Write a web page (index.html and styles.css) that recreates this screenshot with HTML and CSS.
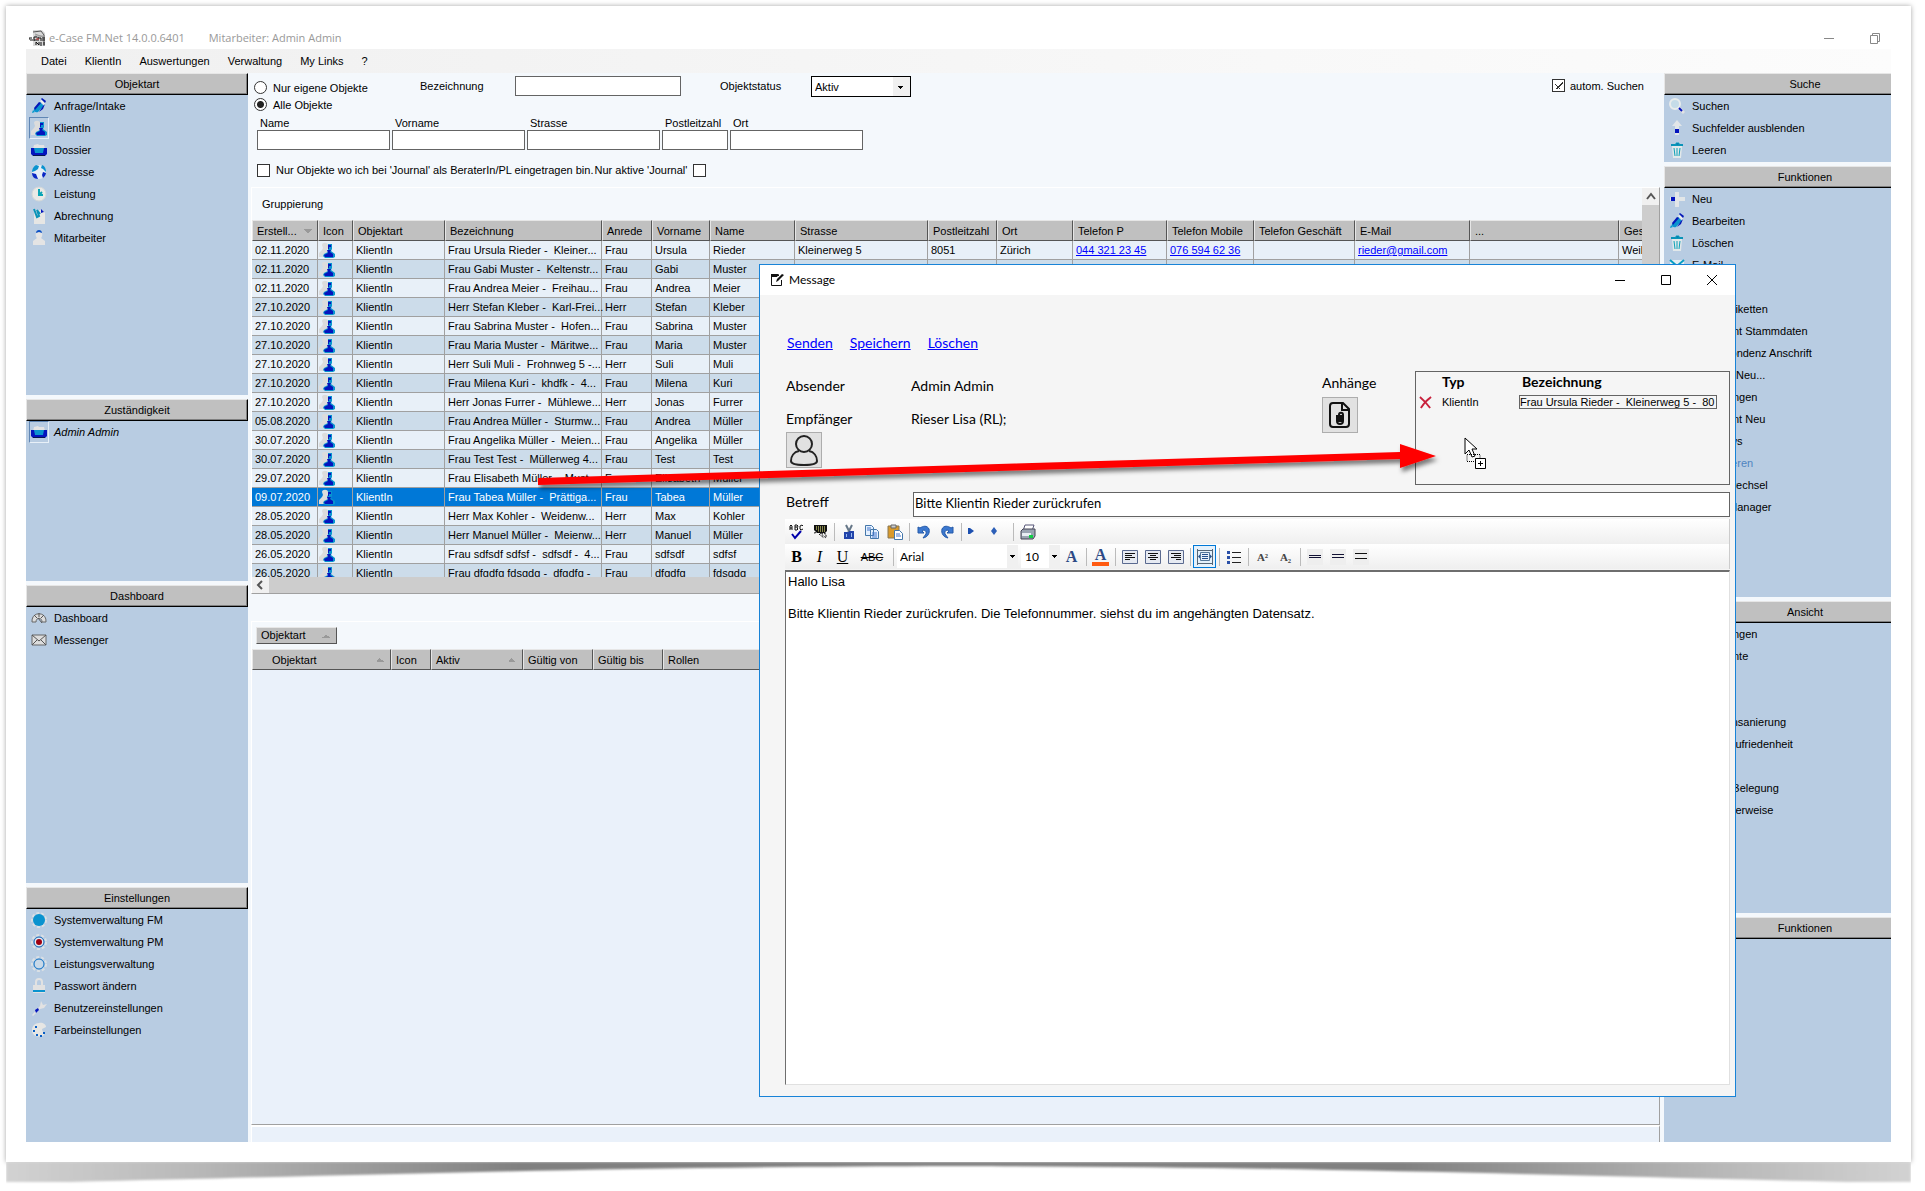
FILE: index.html
```
<!DOCTYPE html>
<html lang="de">
<head>
    <meta charset="UTF-8">
    <meta name="viewport" content="width=device-width, initial-scale=1.0">
    <title>e-Case FM.Net</title>
    <link rel="stylesheet" href="styles.css">
</head>
<body>
    <!-- icon sprite -->
    <svg class="sprite" aria-hidden="true">
        <symbol id="i-pen" viewBox="0 0 16 16">
            <path d="M1 15l1-3 2 2z" fill="#09c"/>
            <path d="M3 11l6-7 4 4-6 6c-2 1-5-1-4-3z" fill="#0a93cf"/>
            <path d="M3 10l5-6 2 1-6 7zM12 8l2-2-2 5-4 3z" fill="#0518b8"/>
            <path d="M9 3l2-1 3 3-1 2z" fill="#eee"/>
            <path d="M11 0l4 3-1 2-4-4z" fill="#0518b8"/>
        </symbol>
        <symbol id="i-people" viewBox="0 0 16 16">
            <path d="M3 3c0-3 6-3 6 0v3l-1 2 2 2v5H0v-4l3-3 1-2z" fill="#dcdcdc"/>
            <path d="M9 2h4v5l-1 2 4 3v3l-2 1H6l-2-2 1-2 4-2z" fill="#0a93cf"/>
            <path d="M9 3h3v2h-2v2H9zM8 8h4l-1 2 3 2v3H6l-1-2 4-2z" fill="#0414bd"/>
        </symbol>
        <symbol id="i-tray" viewBox="0 0 16 16">
            <path d="M3 3l4-1 1 1h5l1 4H2z" fill="#e4e4e4"/>
            <path d="M0 6h16v6l-2 2H2l-2-2z" fill="#0414bd"/>
            <path d="M3 6h10l-1 5H4z" fill="#0a93cf"/>
            <path d="M2 13h12v1H2z" fill="#06154e"/>
        </symbol>
        <symbol id="i-globe" viewBox="0 0 16 16">
            <circle cx="8" cy="8" r="7" fill="#e6eef5"/>
            <path d="M5 1l3 1-1 3-3 2-3 1c0-3 1-5 4-7zM11 1c3 1 4 4 4 7l-3-3-2-1z" fill="#0a93cf"/>
            <path d="M1 9l4 1 2 5c-4 0-6-3-6-6zM12 8l3 1c0 2-2 4-3 5l-1-3z" fill="#0a28c4"/>
        </symbol>
        <symbol id="i-clock" viewBox="0 0 16 16">
            <circle cx="8" cy="8" r="7" fill="#e9e9e6" stroke="#d3d7d8"/>
            <path d="M8 3v6h4M8 9l3-3" fill="none" stroke="#0aa5b5" stroke-width="2"/>
        </symbol>
        <symbol id="i-clip" viewBox="0 0 16 16">
            <path d="M3 2h8l3 3v11H3z" fill="#e6e6e4"/>
            <path d="M3 1l3 8 2-1-2-6 3 4" fill="none" stroke="#0a93b8" stroke-width="2"/>
            <path d="M10 1l3 3-3 1z" fill="#0414bd"/>
        </symbol>
        <symbol id="i-worker" viewBox="0 0 16 16">
            <path d="M8 1c4 0 4 5 2 7l4 3v4H2v-4l4-3C4 6 4 1 8 1z" fill="#e4e4e4"/>
            <path d="M5 3c0-4 6-4 6 0L8 2z" fill="#0a4fc4"/>
        </symbol>
        <symbol id="i-gauge" viewBox="0 0 16 16">
            <path d="M1 12C0 1 16 1 15 12h-4c0-5-6-5-6 0z" fill="#ddd" stroke="#666"/>
            <path d="M3 5l3 3M8 3v4M13 5l-3 3M7 8l4 5" stroke="#555"/>
        </symbol>
        <symbol id="i-mail" viewBox="0 0 16 16">
            <path d="M1 3h14v10H1z" fill="#ddd" stroke="#666"/>
            <path d="M1 3l7 6 7-6M1 13l5-5M15 13l-5-5" fill="none" stroke="#555"/>
        </symbol>
        <symbol id="i-mail2" viewBox="0 0 16 16">
            <path d="M1 3h14v10H1z" fill="#e6eef2"/>
            <path d="M1 3l7 6 7-6" fill="none" stroke="#0a9fc4" stroke-width="2"/>
        </symbol>
        <symbol id="i-cog-fill" viewBox="0 0 16 16">
            <circle cx="8" cy="8" r="7" fill="none" stroke="#dbe0e4" stroke-width="2" stroke-dasharray="3 2"/>
            <circle cx="8" cy="8" r="6" fill="#0a93cf"/>
        </symbol>
        <symbol id="i-cog-red" viewBox="0 0 16 16">
            <circle cx="8" cy="8" r="7" fill="none" stroke="#dbe0e4" stroke-width="2" stroke-dasharray="3 2"/>
            <circle cx="8" cy="8" r="5" fill="#e5ecf2" stroke="#0a5fb4"/>
            <circle cx="8" cy="8" r="3" fill="#a00010"/>
        </symbol>
        <symbol id="i-cog" viewBox="0 0 16 16">
            <circle cx="8" cy="8" r="7" fill="none" stroke="#dbe0e4" stroke-width="2" stroke-dasharray="3 2"/>
            <circle cx="8" cy="8" r="5" fill="#c9d9e8" stroke="#0a6fc4"/>
        </symbol>
        <symbol id="i-lock" viewBox="0 0 16 16">
            <path d="M5 8V4c0-4 6-4 6 0v4" fill="none" stroke="#e2e2e2" stroke-width="2"/>
            <path d="M2 7h12v8H2z" fill="#e2e2e2"/>
            <path d="M2 12h12v2H2z" fill="#0a93cf"/>
        </symbol>
        <symbol id="i-wrench" viewBox="0 0 16 16">
            <path d="M1 15l8-9 1-5 2 4 4-1-3 4-4 1-7 7z" fill="#e2e2e2"/>
            <path d="M4 10l3-2 1 2-3 3z" fill="#0414bd"/>
        </symbol>
        <symbol id="i-palette" viewBox="0 0 16 16">
            <path d="M8 1c3-1 7 1 7 4l-4 2c0 3 3 3 2 6-4 3-12 2-12-5 0-4 3-7 7-7z" fill="#e6e6e4"/>
            <path d="M4 4h2v2H4zM2 8h2v2H2zM5 12h2v2H5zM9 13h2v2H9zM12 10h2v2h-2z" fill="#0a5fc4"/>
        </symbol>
        <symbol id="i-search" viewBox="0 0 16 16">
            <circle cx="6" cy="6" r="5" fill="#c5dce8" stroke="#e8ecec" stroke-width="2"/>
            <path d="M10 10l5 5" stroke="#e2e2e2" stroke-width="3"/>
            <path d="M10 10l3 3" stroke="#0414bd" stroke-width="2"/>
        </symbol>
        <symbol id="i-up" viewBox="0 0 16 16">
            <path d="M8 0l5 6h-3v9H6V6H3z" fill="#e2e6e8"/>
            <path d="M6 9h4v4H6z" fill="#0414bd"/>
        </symbol>
        <symbol id="i-bin" viewBox="0 0 16 16">
            <path d="M3 4h10l-1 12H4z" fill="#e2e8ea"/>
            <path d="M2 2h12v2H2z" fill="#0a93b8"/>
            <path d="M7 1h3v2H7zM5 6l1 8M8 6v8M11 6l-1 8" fill="#0a5fb4" stroke="#0aa0b8"/>
        </symbol>
        <symbol id="i-plus" viewBox="0 0 16 16">
            <path d="M6 1h4v5h6v4h-6v6H6v-6H1V6h5z" fill="#e2e6e8"/>
            <path d="M2 6h4v4H2z" fill="#0414bd"/>
        </symbol>
    </svg>

    <div class="paper">
        <header class="titlebar">
            <svg class="app-icon" viewBox="0 0 16 16">
                <path d="M4 0h9l3 3v13H4z" fill="#d9d9d9"/>
                <path d="M4 2l8-1 3 4v11" fill="none" stroke="#555"/>
                <path d="M6 4l8 3M6 6h8" stroke="#999"/>
                <path d="M0 8h3M1 10h3M0 8v2M5 7v4M5 7h3M5 10h3M9 7v4M9 8h3M12 8v3M13 8h3M13 10h3" fill="none" stroke="#111"/>
                <path d="M7 9h3" stroke="#c33"/>
                <path d="M7 15v-3l3 3v-3M11 13h2M11 15h2M15 12v3" fill="none" stroke="#111"/>
            </svg>
            <span class="app-name">e-Case FM.Net 14.0.0.6401</span>
            <span>Mitarbeiter: Admin Admin</span>
            <button class="win-btn first" aria-label="Minimieren"><svg viewBox="0 0 12 12"><path d="M1 6.500h10" stroke="#888"/></svg></button>
            <button class="win-btn" aria-label="Wiederherstellen"><svg viewBox="0 0 12 12"><path d="M1.500 3.500h7v8h-7zM3.500 3V1.500h7v8H9" fill="none" stroke="#888"/></svg></button>
        </header>
        <nav class="menubar">
            <button>Datei</button>
            <button>KlientIn</button>
            <button>Auswertungen</button>
            <button>Verwaltung</button>
            <button>My Links</button>
            <button>?</button>
        </nav>

        <div class="workspace">
            <aside class="side left">
                <section class="group g-objektart">
                    <h2>Objektart</h2>
                    <ul>
                        <li><button><svg><use href="#i-pen"/></svg>Anfrage/Intake</button></li>
                        <li><button class="selected"><svg><use href="#i-people"/></svg>KlientIn</button></li>
                        <li><button><svg><use href="#i-tray"/></svg>Dossier</button></li>
                        <li><button><svg><use href="#i-globe"/></svg>Adresse</button></li>
                        <li><button><svg><use href="#i-clock"/></svg>Leistung</button></li>
                        <li><button><svg><use href="#i-clip"/></svg>Abrechnung</button></li>
                        <li><button><svg><use href="#i-worker"/></svg>Mitarbeiter</button></li>
                    </ul>
                </section>
                <section class="group g-zustaendigkeit">
                    <h2>Zuständigkeit</h2>
                    <ul>
                        <li><button class="selected own"><svg><use href="#i-tray"/></svg>Admin Admin</button></li>
                    </ul>
                </section>
                <section class="group g-dashboard">
                    <h2>Dashboard</h2>
                    <ul>
                        <li><button><svg><use href="#i-gauge"/></svg>Dashboard</button></li>
                        <li><button><svg><use href="#i-mail"/></svg>Messenger</button></li>
                    </ul>
                </section>
                <section class="group g-einstellungen">
                    <h2>Einstellungen</h2>
                    <ul>
                        <li><button><svg><use href="#i-cog-fill"/></svg>Systemverwaltung FM</button></li>
                        <li><button><svg><use href="#i-cog-red"/></svg>Systemverwaltung PM</button></li>
                        <li><button><svg><use href="#i-cog"/></svg>Leistungsverwaltung</button></li>
                        <li><button><svg><use href="#i-lock"/></svg>Passwort ändern</button></li>
                        <li><button><svg><use href="#i-wrench"/></svg>Benutzereinstellungen</button></li>
                        <li><button><svg><use href="#i-palette"/></svg>Farbeinstellungen</button></li>
                    </ul>
                </section>
            </aside>

            <main class="center">
                <form class="filter">
                    <div class="filter-top">
                        <div class="scope">
                            <label><input type="radio" name="scope">Nur eigene Objekte</label>
                            <label><input type="radio" name="scope" checked>Alle Objekte</label>
                        </div>
                        <label class="lbl-bez" for="bezeichnung">Bezeichnung</label>
                        <input class="field bez" id="bezeichnung" type="text">
                        <label class="lbl-status" for="status">Objektstatus</label>
                        <select id="status" class="status"><option>Aktiv</option><option>Inaktiv</option></select>
                        <label class="auto"><input type="checkbox" checked>autom. Suchen</label>
                    </div>
                    <div class="filter-fields">
                        <label>Name<input class="field" type="text"></label>
                        <label>Vorname<input class="field" type="text"></label>
                        <label>Strasse<input class="field" type="text"></label>
                        <label class="plz">Postleitzahl<input class="field" type="text"></label>
                        <label>Ort<input class="field" type="text"></label>
                    </div>
                    <div class="filter-journal">
                        <label><input type="checkbox">Nur Objekte wo ich bei 'Journal' als BeraterIn/PL eingetragen bin.</label>
                        <label>Nur aktive 'Journal'<input type="checkbox"></label>
                    </div>
                </form>

                <section class="grid-panel">
                    <div class="grid-main">
                        <p class="grouping">Gruppierung</p>
                        <div class="table-clip">
                            <table class="objects">
                                <colgroup>
                                    <col class="w66"><col class="w35"><col class="w92"><col class="w157"><col class="w50"><col class="w58"><col class="w85"><col class="w133"><col class="w69"><col class="w76"><col class="w94"><col class="w87"><col class="w101"><col class="w115"><col class="w149"><col class="w76">
                                </colgroup>
                                <thead>
                                    <tr><th class="sort-down">Erstell...</th><th>Icon</th><th>Objektart</th><th>Bezeichnung</th><th>Anrede</th><th>Vorname</th><th>Name</th><th>Strasse</th><th>Postleitzahl</th><th>Ort</th><th>Telefon P</th><th>Telefon Mobile</th><th>Telefon Geschäft</th><th>E-Mail</th><th>...</th><th>Geschlecht</th></tr>
                                </thead>
                                <tbody id="rows"></tbody>
                            </table>
                        </div>
                        <div class="hscroll"><svg viewBox="0 0 17 17"><path d="M10 4L6 8l4 4" fill="none" stroke="#555" stroke-width="2"/></svg></div>
                    </div>
                    <div class="vscroll"><svg viewBox="0 0 17 17"><path d="M5 11l4-5 4 5" fill="none" stroke="#555" stroke-width="2"/></svg></div>
                </section>

                <section class="details">
                    <button class="group-by">Objektart</button>
                    <table class="roles">
                        <colgroup><col class="w139"><col class="w40"><col class="w92"><col class="w70"><col class="w70"><col></colgroup>
                        <thead><tr><th class="sort-up indent">Objektart</th><th>Icon</th><th class="sort-up">Aktiv</th><th>Gültig von</th><th>Gültig bis</th><th>Rollen</th></tr></thead>
                    </table>
                </section>
                <footer class="status-strip"></footer>
            </main>

            <aside class="side right">
                <section class="group g-suche">
                    <h2>Suche</h2>
                    <ul>
                        <li><button><svg><use href="#i-search"/></svg>Suchen</button></li>
                        <li><button><svg><use href="#i-up"/></svg>Suchfelder ausblenden</button></li>
                        <li><button><svg><use href="#i-bin"/></svg>Leeren</button></li>
                    </ul>
                </section>
                <section class="group g-funktionen">
                    <h2>Funktionen</h2>
                    <ul>
                        <li><button><svg><use href="#i-plus"/></svg>Neu</button></li>
                        <li><button><svg><use href="#i-pen"/></svg>Bearbeiten</button></li>
                        <li><button><svg><use href="#i-bin"/></svg>Löschen</button></li>
                        <li><button><svg><use href="#i-mail2"/></svg>E-Mail</button></li>
                        <li><button><svg></svg>Brief</button></li>
                        <li><button><svg></svg>Adressetiketten</button></li>
                        <li><button><svg></svg>Dokument Stammdaten</button></li>
                        <li><button><svg></svg>Korrespondenz Anschrift</button></li>
                        <li><button><svg></svg>Aufgabe Neu...</button></li>
                        <li><button><svg></svg>Zuweisungen</button></li>
                        <li><button><svg></svg>Dokument Neu</button></li>
                        <li><button><svg></svg>Workflows</button></li>
                        <li><button disabled><svg></svg>Deaktivieren</button></li>
                        <li><button><svg></svg>Beraterwechsel</button></li>
                        <li><button><svg></svg>Termin Manager</button></li>
                    </ul>
                </section>
                <section class="group g-ansicht">
                    <h2>Ansicht</h2>
                    <ul>
                        <li><button><svg></svg>Zuweisungen</button></li>
                        <li><button><svg></svg>Dokumente</button></li>
                        <li><button><svg></svg>Notiz</button></li>
                        <li><button><svg></svg>Ziele</button></li>
                        <li><button><svg></svg>Schuldensanierung</button></li>
                        <li><button><svg></svg>Kundenzufriedenheit</button></li>
                        <li><button><svg></svg>Plan</button></li>
                        <li><button><svg></svg>Zimmer Belegung</button></li>
                        <li><button><svg></svg>Kundenverweise</button></li>
                    </ul>
                </section>
                <section class="group g-extra">
                    <h2>Funktionen</h2>
                </section>
            </aside>
        </div>
        <svg class="paper-shadow" viewBox="0 0 1905 28" preserveAspectRatio="none" aria-hidden="true">
            <defs>
                <linearGradient id="curl"><stop offset="0" stop-color="#d2d2d2"/><stop offset=".1" stop-color="#b8b8b8"/><stop offset=".27" stop-color="#808080"/><stop offset=".73" stop-color="#808080"/><stop offset=".9" stop-color="#b8b8b8"/><stop offset="1" stop-color="#d2d2d2"/></linearGradient>
                <filter id="soft" x="-1%" y="-20%" width="102%" height="160%"><feGaussianBlur stdDeviation="1"/></filter>
            </defs>
            <path d="M0 0H1905V20H1840C1500 12 1300 5 952 4C600 5 400 12 65 20H0z" fill="url(#curl)" filter="url(#soft)"/>
        </svg>
    </div>

    <!-- message window -->
    <section class="dialog" role="dialog" aria-label="Message">
        <header class="dialog-title">
            <svg class="note-icon" viewBox="0 0 15 14">
                <path d="M9 2.500H1.500v10h10V7" fill="none" stroke="#111"/>
                <path d="M1 1h8l-2 3H1z" fill="#111"/>
                <path d="M6 9l1-3 5-5 2 1-6 6z" fill="#111"/>
            </svg>
            <span>Message</span>
            <button class="win-btn first" aria-label="Minimieren"><svg viewBox="0 0 12 12"><path d="M1 6.500h10" stroke="#000"/></svg></button>
            <button class="win-btn" aria-label="Maximieren"><svg viewBox="0 0 12 12"><path d="M1.500 1.500h9v9h-9z" fill="none" stroke="#000"/></svg></button>
            <button class="win-btn" aria-label="Schliessen"><svg viewBox="0 0 12 12"><path d="M1 1l10 10M11 1L1 11" stroke="#000"/></svg></button>
        </header>
        <div class="dialog-body">
            <nav class="actions">
                <a href="#">Senden</a>
                <a href="#">Speichern</a>
                <a href="#">Löschen</a>
            </nav>
            <div class="head">
                <dl class="people">
                    <dt>Absender</dt><dd>Admin Admin</dd>
                    <dt>Empfänger
                        <button class="square" aria-label="Empfänger wählen"><svg viewBox="0 0 34 34"><g fill="none" stroke="#222" stroke-width="2"><ellipse cx="17" cy="11" rx="8" ry="8"/><path d="M12 18C7 19 4 23 4 28c0 3 4 4 13 4s13-1 13-4c0-5-3-9-8-10"/></g></svg></button>
                    </dt><dd>Rieser Lisa (RL);</dd>
                </dl>
                <div class="attach">
                    <span>Anhänge</span>
                    <button class="square" aria-label="Anhang hinzufügen"><svg viewBox="0 0 34 34"><g fill="none" stroke="#111" stroke-width="2"><path d="M10 5h10l6 6v15q0 3-3 3H10q-3 0-3-3V8q0-3 3-3zM19 5v7h7"/><path d="M14 17v6c0 4 6 4 6 0v-6c0-3-4-3-4 0v6h2v-6"/></g></svg></button>
                </div>
                <div class="attachments">
                    <table>
                        <thead><tr><th></th><th>Typ</th><th>Bezeichnung</th></tr></thead>
                        <tbody><tr>
                            <td><button class="remove" aria-label="Entfernen"><svg viewBox="0 0 14 14"><path d="M1 1q6 5 11 12M13 1Q6 6 2 13" fill="none" stroke="#c8203c" stroke-width="2"/></svg></button></td>
                            <td>KlientIn</td>
                            <td><input type="text" aria-label="Bezeichnung" value="Frau Ursula Rieder -  Kleinerweg 5 -  80"></td>
                        </tr></tbody>
                    </table>
                </div>
            </div>
            <div class="subject">
                <label for="betreff">Betreff</label>
                <input id="betreff" type="text" value="Bitte Klientin Rieder zurückrufen">
            </div>
            <div class="toolbar">
                <button aria-label="Rechtschreibung"><svg viewBox="0 0 16 16"><path d="M1 6V2l1-1 1 1v4M1 4h2M6 6V1h2l1 1-1 2 1 1-1 1H6M6 3h2M14 2l-1-1-2 1v3l1 1 2-1" fill="none" stroke="#111"/><path d="M3 10l3 4 6-7" fill="none" stroke="#00a" stroke-width="2"/></svg></button>
                <button aria-label="Textbausteine"><svg viewBox="0 0 16 16"><path d="M2 1h13v6l-2 2H5L2 6z" fill="#111"/><path d="M4 3h10M4 5h10M6 7h7" stroke="#ff8" stroke-dasharray="1 1"/><path d="M2 9l5-1 7 6M7 10l5 4M9 9l5 1v4" fill="none" stroke="#111" stroke-dasharray="2 1"/></svg></button>
                <i class="sep"></i>
                <button aria-label="Ausschneiden"><svg viewBox="0 0 16 16"><path d="M5 1l4 8M11 1L7 9" stroke="#678" stroke-width="2"/><path d="M4 9h3v5H4zM9 8h3v6H9z" fill="#9bbcf0" stroke="#24a" stroke-width="2"/></svg></button>
                <button aria-label="Kopieren"><svg viewBox="0 0 16 16"><path d="M1.500 1.500h6l2 2v8h-8zM6.500 5.500h6l2 2v7h-8z" fill="#e4f0ff" stroke="#47a"/><path d="M3 4h4M3 6h3M8 9h5M8 11h5M8 13h5" stroke="#47c"/></svg></button>
                <button aria-label="Einfügen"><svg viewBox="0 0 16 16"><path d="M1 2h11v12H1z" fill="#d99a2b" stroke="#875"/><path d="M4 1h5v3H4z" fill="#ccc" stroke="#666"/><path d="M7.500 6.500h5l3 3v6h-8z" fill="#fff" stroke="#47a"/><path d="M9 10h4M9 12h5" stroke="#47c"/></svg></button>
                <i class="sep"></i>
                <button aria-label="Rückgängig"><svg viewBox="0 0 16 16"><path d="M2 3v6h6L6 7c2-2 5 0 4 3l-3 4c5-1 7-5 6-9-2-4-6-3-9-1z" fill="#3b78d0" stroke="#2459a8"/></svg></button>
                <button aria-label="Wiederholen"><svg viewBox="0 0 16 16"><path d="M14 3v6H8l2-2c-2-2-5 0-4 3l3 4c-5-1-7-5-6-9 2-4 6-3 9-1z" fill="#3b78d0" stroke="#2459a8"/></svg></button>
                <i class="sep"></i>
                <button aria-label="Zurück"><svg viewBox="0 0 16 16"><path d="M0 4h2l4 3-4 3H0z" fill="#1c4fb0"/></svg></button>
                <button aria-label="Vor"><svg viewBox="0 0 16 16"><path d="M0 7l3-4 3 4-3 4z" fill="#2c5fb8"/></svg></button>
                <i class="sep"></i>
                <button aria-label="Drucken"><svg viewBox="0 0 16 16"><path d="M5 1h9l-2 6H3z" fill="#fff" stroke="#557"/><path d="M1 7l2-2h12v7l-2 3H1z" fill="#9aa4b2" stroke="#445"/><path d="M2 9h9v3H2z" fill="#e8eef4"/><path d="M9 11h4v3H9z" fill="#1c4"/></svg></button>
            </div>
            <div class="toolbar">
                <button class="t-bold">B</button>
                <button class="t-italic">I</button>
                <button class="t-under">U</button>
                <button class="t-strike">ABC</button>
                <i class="sep"></i>
                <select class="font-name" aria-label="Schriftart"><option>Arial</option></select>
                <select class="font-size" aria-label="Schriftgrösse"><option>10</option></select>
                <button class="t-blue">A</button>
                <i class="sep"></i>
                <button class="t-color">A</button>
                <i class="sep"></i>
                <button aria-label="Linksbündig"><svg viewBox="0 0 16 16"><path d="M.5 1.500h15v13H.5z" fill="#e6eaf2" stroke="#5a6a90"/><path d="M3 4.500h10M3 6.500h7M3 8.500h10M3 10.500h5" stroke="#111"/></svg></button>
                <button aria-label="Zentriert"><svg viewBox="0 0 16 16"><path d="M.5 1.500h15v13H.5z" fill="#e6eaf2" stroke="#5a6a90"/><path d="M3 4.500h10M5 6.500h6M3 8.500h10M5 10.500h6" stroke="#111"/></svg></button>
                <button aria-label="Rechtsbündig"><svg viewBox="0 0 16 16"><path d="M.5 1.500h15v13H.5z" fill="#e6eaf2" stroke="#5a6a90"/><path d="M3 4.500h10M6 6.500h7M3 8.500h10M8 10.500h5" stroke="#111"/></svg></button>
                <i class="sep"></i>
                <button class="pressed" aria-label="Blocksatz"><svg viewBox="0 0 16 16"><path d="M.5 0v16M15.500 0v16M1 1.500h14M1 14.500h14" stroke="#567"/><path d="M3.500 3.500h9v8h-9z" fill="#e8f0fa" stroke="#579"/><path d="M5 5.500h6M5 7.500h6M5 9.500h6" stroke="#25518c"/><path d="M1 7.500l2-2v4zM15 7.500l-2-2v4z" fill="#25518c"/></svg></button>
                <i class="sep"></i>
                <button aria-label="Aufzählung"><svg viewBox="0 0 16 16"><path d="M1 2h3v3H1zM1 7h3v3H1zM1 12h3v3H1z" fill="#2a50a8"/><path d="M6 3.500h9M6 8.500h9M6 13.500h9" stroke="#222"/></svg></button>
                <i class="sep"></i>
                <button class="t-script">A²</button>
                <button class="t-script">A₂</button>
                <i class="sep"></i>
                <button class="spacing" aria-label="Zeilenabstand 1"><svg viewBox="0 0 16 16"><path d="M2 6.500h12M2 8.500h12" stroke="#113"/></svg></button>
                <button class="spacing" aria-label="Zeilenabstand 1.5"><svg viewBox="0 0 16 16"><path d="M2 5.500h12M2 8.500h12" stroke="#113"/></svg></button>
                <button class="spacing" aria-label="Zeilenabstand 2"><svg viewBox="0 0 16 16"><path d="M2 4.500h12M2 9.500h12" stroke="#111"/></svg></button>
            </div>
            <textarea class="message" aria-label="Nachricht">Hallo Lisa

Bitte Klientin Rieder zurückrufen. Die Telefonnummer. siehst du im angehängten Datensatz.</textarea>
        </div>
    </section>

    <!-- drag arrow and drop cursor -->
    <svg class="drag" viewBox="0 0 960 60" aria-hidden="true">
        <defs><filter id="drop" x="-5%" y="-30%" width="110%" height="180%"><feDropShadow dx="2" dy="4" stdDeviation="2" flood-opacity=".5"/></filter></defs>
        <path d="M0 41L862 15V7L898 19 862 31V22L0 48z" fill="#f00" filter="url(#drop)"/>
        <path d="M927 1v16l4-4 3 7 3-1-3-7h5z" fill="#fff" stroke="#000"/>
        <path d="M929 17.500h13v7h-13z" fill="none" stroke="#000" stroke-dasharray="1 1"/>
        <path d="M937.500 21.500h10v10h-10z" fill="#fff" stroke="#000"/>
        <path d="M940 26.500h5M942.500 24v5" stroke="#000"/>
    </svg>
    <script src="script.js"></script>
</body>
</html>
```
FILE: styles.css
```
* {
    box-sizing: border-box;
}

body {
    margin: 0;
    padding: 6px 14px 29px 6px;
    min-height: 100vh;
    display: flex;
    position: relative;
    background-color: #fff;
    color: #000;
    font-family: "Liberation Sans", Arial, sans-serif;
    font-size: 11px;
    line-height: 14px;
    overflow: hidden;
}

h2, p, ul, dl, dd {
    margin: 0;
    padding: 0;
}

button, input, select, textarea {
    font: inherit;
    color: inherit;
    margin: 0;
    border-radius: 0;
}

button {
    padding: 0;
    border: none;
    background: none;
}

svg {
    display: block;
    flex: none;
}

.sprite {
    position: absolute;
    width: 0;
    height: 0;
}

.paper {
    flex: 1;
    min-width: 0;
    position: relative;
    display: flex;
    flex-direction: column;
    padding: 17px 20px 20px;
    background-color: #fff;
    box-shadow: 0 0 5px rgba(0, 0, 0, 0.35);
}

.paper-shadow {
    position: absolute;
    left: 0;
    top: 100%;
    width: 100%;
    height: 28px;
}

/* title and menu */
.titlebar {
    display: flex;
    align-items: center;
    height: 26px;
    padding: 4px 10px 0 3px;
    gap: 4px;
    color: #999;
    font-family: "Open Sans", sans-serif;
    font-size: 11px;
}

.app-icon {
    width: 16px;
    height: 16px;
}

.app-name {
    margin-right: 20px;
}

.win-btn {
    width: 12px;
    height: 12px;
    margin-left: 30px;
}

.win-btn svg {
    width: 12px;
    height: 12px;
}

.win-btn.first {
    margin-left: auto;
}

.menubar {
    display: flex;
    align-items: center;
    gap: 18px;
    height: 24px;
    padding-left: 15px;
    background: linear-gradient(to right, #f0f0f0, #fcfcfc);
}

.workspace {
    flex: 1;
    min-height: 0;
    display: grid;
    grid-template-columns: 222px minmax(0, 1fr) 227px;
    background-color: #f4f8fc;
}

/* side panels */
.side {
    display: flex;
    flex-direction: column;
    gap: 4px;
    min-width: 0;
}

.group {
    min-height: 0;
    overflow: hidden;
    background-color: #b8cce2;
}

.g-objektart { flex: 322 1 0; }
.g-zustaendigkeit { flex: 182 1 0; }
.g-dashboard { flex: 298 1 0; }
.g-einstellungen { flex: 255 1 0; }
.g-suche { flex: 89 1 0; }
.g-funktionen { flex: 431 1 0; }
.g-ansicht { flex: 312 1 0; }
.g-extra { flex: 225 1 0; }

.group h2 {
    height: 22px;
    line-height: 20px;
    font-size: 11px;
    font-weight: normal;
    text-align: center;
    background-color: #c0c0c0;
    border-top: 1px solid #e6e6e6;
    border-left: 1px solid #e6e6e6;
    border-right: 1px solid #000;
    border-bottom: 1px solid #000;
    box-shadow: inset -1px -1px 0 #808080;
}

.right .group h2 {
    padding-left: 54px;
    border-right: none;
    box-shadow: inset 0 -1px 0 #808080;
}

.group ul {
    list-style: none;
}

.group li button {
    display: flex;
    align-items: center;
    gap: 5px;
    height: 22px;
    padding-left: 3px;
    white-space: nowrap;
}

.group li svg {
    width: 20px;
    height: 22px;
    padding: 2px;
}

.group li .selected svg {
    border: 1px solid;
    border-color: #5f86b4 #e8f0f8 #e8f0f8 #5f86b4;
    padding: 1px;
}

.right .group li button:disabled {
    color: #4f84c0;
}

.own {
    font-style: italic;
}

/* filter */
.center {
    display: flex;
    flex-direction: column;
    min-width: 0;
}

.filter {
    height: 114px;
}

.filter-top {
    display: flex;
    align-items: flex-start;
    height: 44px;
    padding: 3px 20px 0 6px;
}

.scope {
    width: 166px;
    padding-top: 3px;
}

.scope label {
    display: flex;
    align-items: center;
    gap: 6px;
    height: 17px;
}

.filter-top .lbl-bez,
.filter-top .lbl-status {
    line-height: 20px;
    width: 95px;
}

.filter-top .lbl-status {
    width: 91px;
    margin-left: 39px;
}

.auto {
    display: flex;
    align-items: center;
    gap: 5px;
    height: 19px;
    margin-left: auto;
}

.field {
    height: 20px;
    border: 1px solid #646464;
    background-color: #fff;
    padding: 0 3px;
}

.bez {
    width: 166px;
}

select {
    appearance: none;
    border: none;
    padding: 0 4px;
    background: linear-gradient(#000, #000) right 7px top 9px / 5px 1px no-repeat,
        linear-gradient(#000, #000) right 8px top 10px / 3px 1px no-repeat,
        linear-gradient(#000, #000) right 9px top 11px / 1px 1px no-repeat,
        linear-gradient(#f0f0f0, #f0f0f0) right / 17px 100% no-repeat #fff;
}

.status {
    width: 100px;
    height: 21px;
    padding: 0 3px;
    border: 1px solid #000;
}

input[type="radio"],
input[type="checkbox"] {
    appearance: none;
    flex: none;
    width: 13px;
    height: 13px;
    border: 1px solid #333;
    background-color: #fff;
}

input[type="radio"] {
    border-radius: 50%;
}

input[type="radio"]:checked {
    background: radial-gradient(circle, #222 3px, #fff 4px);
}

.auto input:checked {
    background: linear-gradient(45deg, transparent 46%, #333 46% 58%, transparent 58%) 2px 4px / 5px 5px no-repeat,
        linear-gradient(135deg, transparent 44%, #333 44% 58%, transparent 58%) 3px 2px / 7px 7px no-repeat #fff;
}

.filter-fields {
    display: flex;
    gap: 2px;
    padding-left: 9px;
}

.filter-fields label {
    display: flex;
    flex-direction: column;
    width: 133px;
    line-height: 13px;
    text-indent: 3px;
}

.filter-fields .plz {
    width: 66px;
}

.filter-journal {
    display: flex;
    align-items: center;
    gap: 1px;
    height: 40px;
    padding-left: 9px;
}

.filter-journal label {
    display: flex;
    align-items: center;
    gap: 6px;
}

/* object grid */
.grid-panel {
    flex: 407 1 0;
    min-height: 0;
    display: flex;
    margin: 0 4px 0 3px;
    border: 1px solid #fff;
    border-right-color: #a0a0a0;
    border-bottom-color: #a0a0a0;
}

.grid-main {
    flex: 1;
    min-width: 0;
    display: flex;
    flex-direction: column;
}

.grouping {
    height: 32px;
    padding: 9px 10px;
}

.table-clip {
    flex: 1;
    min-height: 0;
    overflow: hidden;
}

table {
    border-collapse: separate;
    border-spacing: 0;
    table-layout: fixed;
}

.objects {
    width: 1443px;
}

.w35 { width: 35px; }
.w40 { width: 40px; }
.w50 { width: 50px; }
.w58 { width: 58px; }
.w66 { width: 66px; }
.w69 { width: 69px; }
.w70 { width: 70px; }
.w76 { width: 76px; }
.w85 { width: 85px; }
.w87 { width: 87px; }
.w92 { width: 92px; }
.w94 { width: 94px; }
.w101 { width: 101px; }
.w115 { width: 115px; }
.w133 { width: 133px; }
.w139 { width: 139px; }
.w149 { width: 149px; }
.w157 { width: 157px; }

.objects th,
.roles th {
    height: 21px;
    padding: 0 0 0 4px;
    font-weight: normal;
    text-align: left;
    white-space: nowrap;
    background-color: #c0c0c0;
    border: 1px solid #e6e6e6;
    border-right-color: #555;
    border-bottom-color: #555;
}

.objects td {
    height: 19px;
    padding: 0 0 0 3px;
    white-space: nowrap;
    border-right: 1px solid #a0a0a0;
    border-bottom: 1px solid #a0a0a0;
    background-color: #e8f0f8;
}

.objects tr:nth-child(even) td {
    background-color: #ccdcea;
}

.objects tr.active td {
    background-color: #0078d7;
    color: #fff;
}

.objects td svg {
    width: 16px;
    height: 16px;
    margin-left: -2px;
}

.objects a {
    color: #00f;
}

.objects .sort-down {
    background: conic-gradient(from -45deg at 50% 100%, #999 90deg, transparent 0) right 5px center / 8px 4px no-repeat #c0c0c0;
}

.hscroll {
    height: 16px;
    background: linear-gradient(#f0f0f0, #f0f0f0) left / 17px 100% no-repeat #cdcdcd;
}

.vscroll {
    width: 17px;
    background: linear-gradient(#f0f0f0, #f0f0f0) top / 100% 17px no-repeat #cdcdcd;
}

.hscroll svg,
.vscroll svg {
    width: 17px;
    height: 17px;
}

/* details */
.details {
    flex: 504 1 0;
    min-height: 0;
    display: flex;
    flex-direction: column;
    margin: 27px 4px 0 3px;
    border: 1px solid #fff;
    border-right-color: #a0a0a0;
    border-bottom-color: #a0a0a0;
    background: linear-gradient(#f4f8fc 27px, #eaf1fa 27px);
}

.group-by {
    width: 81px;
    height: 17px;
    margin: 5px 4px;
    padding-left: 4px;
    line-height: 15px;
    text-align: left;
    border: 1px solid #e6e6e6;
    border-right-color: #555;
    border-bottom-color: #555;
}

.roles {
    width: 100%;
}

.group-by,
.roles th.sort-up {
    background: conic-gradient(from 135deg at 50% 0, #999 90deg, transparent 0) right 6px center / 8px 4px no-repeat #c0c0c0;
}

.roles .indent {
    padding-left: 19px;
}

.status-strip {
    height: 17px;
    margin: 0 4px 0 3px;
    border: 1px solid #fff;
    border-top-width: 2px;
    border-bottom: none;
    border-right-color: #a0a0a0;
    background-color: #eaf1fa;
}

/* message window, floats over the workspace */
.dialog {
    position: absolute;
    left: 759px;
    top: 264px;
    width: 977px;
    height: 833px;
    display: flex;
    flex-direction: column;
    border: 1px solid #1883d7;
    background-color: #f5f5f5;
    font-family: Lato, sans-serif;
    font-size: 14px;
    line-height: 20px;
}

.dialog-title {
    display: flex;
    align-items: center;
    height: 30px;
    padding: 0 17px 0 10px;
    background-color: #fff;
    font-size: 12px;
}

.dialog-title .win-btn {
    margin-left: 34px;
}

.dialog-title .win-btn.first {
    margin-left: auto;
}

.note-icon {
    width: 15px;
    height: 14px;
    margin-right: 4px;
}

.dialog-body {
    flex: 1;
    display: flex;
    flex-direction: column;
    padding: 38px 5px 11px 25px;
}

.actions {
    display: flex;
    gap: 17px;
    padding-left: 2px;
}

.actions a {
    color: #00f;
}

.head {
    display: flex;
    height: 114px;
    margin-top: 18px;
    padding-left: 1px;
}

.people {
    flex: 1;
    display: grid;
    grid-template-columns: 125px 1fr;
    grid-template-rows: 20px auto;
    row-gap: 13px;
    padding-top: 5px;
}

.square {
    display: block;
    width: 36px;
    height: 36px;
    border: 1px solid #adadad;
    background-color: #e1e1e1;
}

.people .square {
    margin-top: 3px;
}

.attach {
    width: 93px;
    padding-top: 2px;
}

.attach .square {
    margin-top: 4px;
}

.attachments {
    width: 315px;
    border: 1px solid #646464;
}

.attachments table {
    width: 100%;
}

.attachments th {
    height: 20px;
    padding: 0;
    text-align: left;
}

.attachments th:first-child {
    width: 26px;
}

.attachments th:nth-child(2) {
    width: 77px;
}

.attachments th:nth-child(3) {
    padding-left: 3px;
}

.attachments td {
    height: 20px;
    padding: 0;
    font-family: "Liberation Sans", Arial, sans-serif;
    font-size: 11px;
    line-height: 14px;
}

.attachments td input {
    display: block;
    width: 198px;
    height: 14px;
    padding: 0;
    border: 1px solid #646464;
    background-color: #f5f5f5;
    white-space: pre;
}

.remove {
    display: block;
    margin-left: 3px;
}

.remove svg {
    width: 13px;
    height: 13px;
}

.subject {
    display: flex;
    margin-top: 7px;
    padding-left: 1px;
}

.subject label {
    width: 127px;
}

.subject input {
    flex: 1;
    height: 25px;
    padding: 0 1px 4px;
    border: 1px solid #646464;
    background-color: #fff;
    font-size: 13px;
}

.toolbar {
    display: flex;
    align-items: center;
    height: 25px;
    background: linear-gradient(#fff, #efefef);
    border-right: 1px solid #ccc;
}

.subject + .toolbar {
    margin-top: 2px;
}

.toolbar button {
    display: flex;
    align-items: center;
    justify-content: center;
    width: 23px;
    height: 23px;
    font-family: "Liberation Serif", serif;
    font-size: 16px;
}

.toolbar svg {
    width: 16px;
    height: 16px;
}

.sep {
    width: 6px;
    height: 18px;
    background: linear-gradient(#bbb, #bbb) center / 1px 100% no-repeat;
}

.toolbar .t-bold { font-weight: bold; }
.toolbar .t-italic { font-style: italic; }
.toolbar .t-under { text-decoration: underline; }

.toolbar .t-strike {
    width: 36px;
    font-family: "Liberation Sans", sans-serif;
    font-size: 11px;
    text-decoration: line-through;
}

.toolbar .t-blue,
.toolbar .t-color {
    font-weight: bold;
    color: #2d4a86;
}

.toolbar .t-color {
    height: 18px;
    width: 17px;
    margin: 0 3px;
    border-bottom: 4px solid #ff5a10;
}

.toolbar .t-script {
    font-size: 11px;
    font-weight: bold;
    color: #444;
}

.toolbar .pressed {
    border: 1px solid #0078d7;
    background-color: #e5f1fb;
}

.toolbar .spacing svg {
    background-color: #eee;
}

.toolbar select {
    height: 23px;
    font-size: 12px;
    background-position: right 3px top 10px, right 4px top 11px, right 5px top 12px, right;
    background-size: 5px 1px, 3px 1px, 1px 1px, 11px 100%;
}

.toolbar .font-name {
    width: 121px;
    padding-left: 3px;
    margin: 0 3px 0 1px;
}

.toolbar .font-size {
    width: 39px;
}

.message {
    flex: 1;
    margin-top: 1px;
    padding: 2px;
    border: 1px solid #e0e0e0;
    border-top: 2px solid #6e6e6e;
    border-left-color: #6e6e6e;
    background-color: #fff;
    font-family: "Liberation Sans", Arial, sans-serif;
    font-size: 13px;
    line-height: 16px;
    resize: none;
}

.drag {
    position: absolute;
    left: 538px;
    top: 437px;
    width: 960px;
    height: 60px;
}
```
FILE: script.js
```
const rows = [
    ["02.11.2020", "Frau Ursula Rieder -  Kleiner...", "Frau", "Ursula", "Rieder"],
    ["02.11.2020", "Frau Gabi Muster -  Keltenstr...", "Frau", "Gabi", "Muster"],
    ["02.11.2020", "Frau Andrea Meier -  Freihau...", "Frau", "Andrea", "Meier"],
    ["27.10.2020", "Herr Stefan Kleber -  Karl-Frei...", "Herr", "Stefan", "Kleber"],
    ["27.10.2020", "Frau Sabrina Muster -  Hofen...", "Frau", "Sabrina", "Muster"],
    ["27.10.2020", "Frau Maria Muster -  Märitwe...", "Frau", "Maria", "Muster"],
    ["27.10.2020", "Herr Suli Muli -  Frohnweg 5 -...", "Herr", "Suli", "Muli"],
    ["27.10.2020", "Frau Milena Kuri -  khdfk -  4...", "Frau", "Milena", "Kuri"],
    ["27.10.2020", "Herr Jonas Furrer -  Mühlewe...", "Herr", "Jonas", "Furrer"],
    ["05.08.2020", "Frau Andrea Müller -  Sturmw...", "Frau", "Andrea", "Müller"],
    ["30.07.2020", "Frau Angelika Müller -  Meien...", "Frau", "Angelika", "Müller"],
    ["30.07.2020", "Frau Test Test -  Müllerweg 4...", "Frau", "Test", "Test"],
    ["29.07.2020", "Frau Elisabeth Müller -  Must...", "Frau", "Elisabeth", "Müller"],
    ["09.07.2020", "Frau Tabea Müller -  Prättiga...", "Frau", "Tabea", "Müller"],
    ["28.05.2020", "Herr Max Kohler -  Weidenw...", "Herr", "Max", "Kohler"],
    ["28.05.2020", "Herr Manuel Müller -  Meienw...", "Herr", "Manuel", "Müller"],
    ["26.05.2020", "Frau sdfsdf sdfsf -  sdfsdf -  4...", "Frau", "sdfsdf", "sdfsf"],
    ["26.05.2020", "Frau dfgdfg fdsgdg -  dfgdfg -", "Frau", "dfgdfg", "fdsgdg"]
];

// contact columns are only filled for the first client
const contact = [
    "Kleinerweg 5", "8051", "Zürich",
    '<a href="#">044 321 23 45</a>', '<a href="#">076 594 62 36</a>', "",
    '<a href="#">rieder@gmail.com</a>', "", "Weiblich"
];

document.getElementById("rows").innerHTML = rows.map((r, i) => {
    const extra = contact.map(c => `<td>${i === 0 ? c : ""}</td>`).join("");
    const cells = r.slice(1).map(c => `<td>${c.replace(/ {2}/g, " &nbsp;")}</td>`).join("");
    return `<tr class="${r[0] === "09.07.2020" ? "active" : ""}">
        <td>${r[0]}</td><td><svg><use href="#i-people"/></svg></td><td>KlientIn</td>${cells}${extra}</tr>`;
}).join("");
```
